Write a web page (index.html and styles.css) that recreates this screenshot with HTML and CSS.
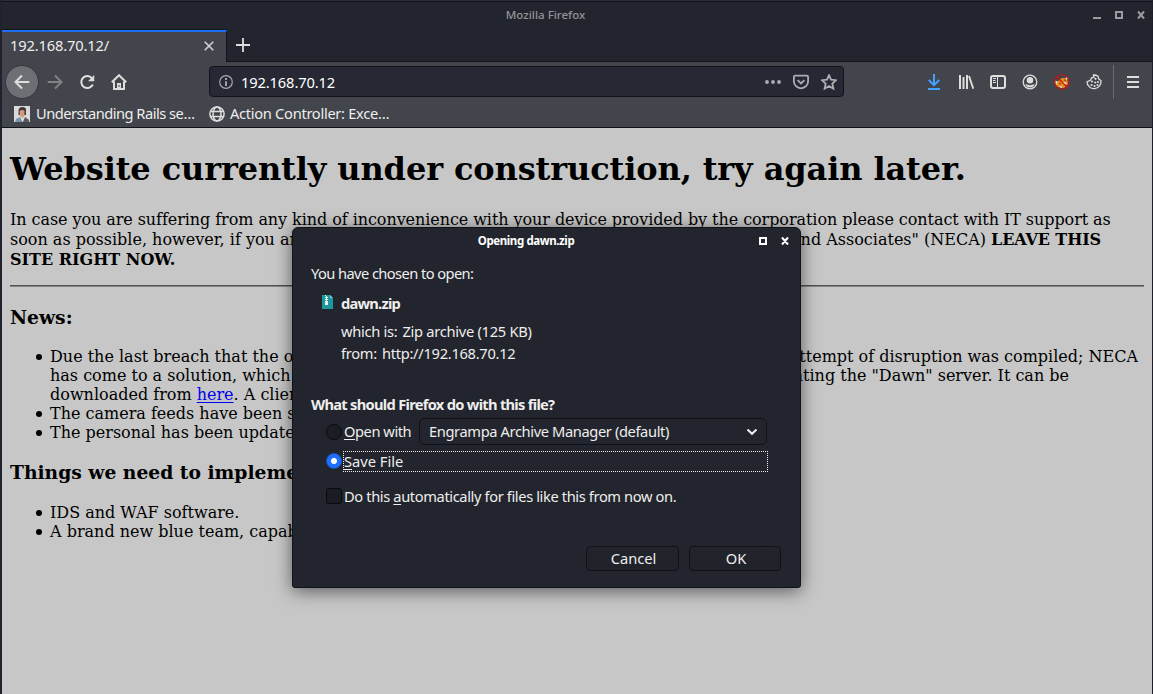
FILE: index.html
```
<!DOCTYPE html>
<html lang="en">
<head>
<meta charset="utf-8">
<title>Mozilla Firefox</title>
<link rel="stylesheet" href="styles.css">
</head>
<body>
<div class="window">
  <header class="titlebar">
    <span class="window-title">Mozilla Firefox</span>
    <svg class="window-controls" width="54" height="10" viewBox="0 0 54 10"><path d="M1 8h8M46 1.500l6 7M52 1.500l-6 7" fill="none" stroke="#9b9ca1" stroke-width="2"/><path d="M24 2h6v6h-6z" fill="none" stroke="#9b9ca1" stroke-width="2"/></svg>
  </header>
  <div class="tabs">
    <div class="tab"><span class="tab-label">192.168.70.12/</span>
      <svg width="10" height="10" viewBox="0 0 10 10"><path d="M.7.7l8.600 8.600M9.300.7L.7 9.300" stroke="#d3d3d3" stroke-width="1.600"/></svg>
    </div>
    <svg class="new-tab" width="14" height="14" viewBox="0 0 14 14"><path d="M7 0v14M0 7h14" stroke="#dededd" stroke-width="1.800"/></svg>
  </div>
  <nav class="toolbar">
    <span class="back"><svg width="16" height="16" viewBox="0 0 16 16"><path d="M15.300 8H1.500M8 1.500L1.500 8 8 14.500" class="stroke"/></svg></span>
    <svg class="forward" width="16" height="16" viewBox="0 0 16 16"><path d="M.7 8h13.800M8 1.500L14.500 8 8 14.500" class="stroke"/></svg>
    <svg class="reload" width="16" height="16" viewBox="0 0 16 16"><path d="M13 4.300a6 6 0 1 0 .8 6.200" class="stroke"/><path d="M15.200 1v6.300H9z" fill="#dededd"/></svg>
    <svg class="home" width="16" height="16" viewBox="0 0 16 16"><path d="M.8 8.300L8 1.200l7.200 7.100M3 7.500V15h10V7.500" class="stroke"/><path d="M6 9h4v6H6z" fill="#dededd"/><path d="M8 11v2" stroke="#43454c" stroke-width="1"/></svg>
    <div class="urlbar">
      <svg width="14" height="14" viewBox="0 0 14 14"><circle cx="7" cy="7" r="6.300" fill="none" stroke="#a8a9ad" stroke-width="1.200"/><path d="M7 3v2M7 6.200V11" stroke="#b5b6b9" stroke-width="1.700"/></svg>
      <span class="url">192.168.70.12</span>
      <svg width="16" height="16" viewBox="0 0 16 16" fill="#adadb1"><circle cx="2" cy="8" r="1.900"/><circle cx="8" cy="8" r="1.900"/><circle cx="14" cy="8" r="1.900"/></svg>
      <svg width="16" height="16" viewBox="0 0 16 16"><path d="M2.200 1.700h11.600q1.300 0 1.300 1.300v4.200a7.100 7.100 0 0 1-14.200 0V3q0-1.300 1.300-1.300z" class="muted"/><path d="M4.600 6.200L8 9.500l3.400-3.300" class="muted"/></svg>
      <svg width="16" height="16" viewBox="0 0 16 16"><path d="M8 1.200l2 4.500 5 .5-3.700 3.300 1.100 5.200L8 12.100l-4.400 2.600 1.100-5.200L1 6.200l5-.5z" class="muted"/></svg>
    </div>
    <div class="tools">
      <svg width="16" height="16" viewBox="0 0 16 16"><path d="M8 0v11M2.700 6L8 11.200 13.300 6M2 15h12" fill="none" stroke="#45a1ff" stroke-width="2"/></svg>
      <svg width="16" height="16" viewBox="0 0 16 16"><path d="M2 1v14M5.500 3v12M9 1v14" stroke="#dededd" stroke-width="2"/><path d="M11 2l4.300 12.800" stroke="#dededd" stroke-width="1.900"/></svg>
      <svg width="16" height="16" viewBox="0 0 16 16"><rect x="1" y="2" width="14" height="12" rx="2" class="stroke"/><path d="M7.500 2v12" stroke="#dededd"/><path d="M3 4.500h3M3 6.500h2.500M3 8.500h3" stroke="#dededd"/></svg>
      <svg width="16" height="16" viewBox="0 0 16 16"><circle cx="8" cy="8" r="6.800" fill="none" stroke="#dededd" stroke-width="1.300"/><circle cx="8" cy="6.300" r="3.200" fill="#dededd"/><path d="M3.200 10.300l3 .5q1.800 1 3.600 0l3-.5Q11 13.500 8 13.500t-4.800-3.200z" fill="#dededd"/></svg>
      <svg width="16" height="16" viewBox="0 0 16 16"><path d="M1 8l3-1 4-3 5 0 1 6-4 4-6-1-3-3z" fill="#e98a1b"/><path d="M1 6l2.500 2L2 11zM9 8l4 1-3 2zM12 3l2 1-1.500 2zM5 12l4 1-2 1z" fill="#eee"/><path d="M10 6l2 .4M5 9l2 1" stroke="#6c3c1b"/><circle cx="8" cy="8" r="7.200" fill="none" stroke="#c51518" stroke-width="1.100"/><path d="M3 3l10 10" stroke="#c51518" stroke-width="1.300"/></svg>
      <svg width="16" height="16" viewBox="0 0 16 16"><path d="M7.500 1L8 3.200l-2.500.6L4.600 6 1 7.800a7 7 0 1 0 13.900-1.300L12.800 5 12 2.200A7 7 0 0 0 7.500 1z" fill="none" stroke="#dededd" stroke-width="1.300"/><g fill="#dededd"><circle cx="9.500" cy="4.800" r="1.100"/><circle cx="6" cy="7.500" r="1.100"/><circle cx="9.300" cy="8.500" r="1.100"/><circle cx="12" cy="8" r="1"/><circle cx="5.500" cy="11" r="1.100"/><circle cx="8.500" cy="12" r="1.100"/><circle cx="11.500" cy="11" r="1"/></g></svg>
      <span class="divider"></span>
      <svg width="12" height="12" viewBox="0 0 12 12"><path d="M0 1h12M0 6h12M0 11h12" stroke="#dededd" stroke-width="1.800"/></svg>
    </div>
  </nav>
  <div class="bookmarks">
    <svg width="16" height="16" viewBox="0 0 16 16"><path d="M0 0h16v16H0z" fill="#d9dad9"/><path d="M4.500 9V5q0-4 4-4t3.500 4v4z" fill="#42383b"/><path d="M5.500 5q3-2 5 0v5l-2 2-2.500-2z" fill="#d79a7d"/><path d="M1 16l1-3 4-2 3 5z" fill="#7998ae"/><path d="M9 16l2-5 4 3v2z" fill="#5d5659"/><path d="M7 12l2 1v3z" fill="#e3e5e7"/></svg>
    <span class="bookmark first">Understanding Rails se…</span>
    <svg width="16" height="16" viewBox="0 0 16 16" fill="none" stroke="#dededd" stroke-width="1.500"><circle cx="8" cy="8" r="7.100"/><ellipse cx="8" cy="8" rx="4" ry="7"/><path d="M1.500 5.500h13M1.500 10.500h13"/></svg>
    <span class="bookmark second">Action Controller: Exce…</span>
  </div>
  <main class="page">
    <h1>Website currently under construction, try again later.</h1>
    <div class="intro">
      <div class="line first-line">In case you are suffering from any kind of inconvenience with your device provided by the corporation please contact with IT support as</div>
      <div class="line split intro-split"><span>soon as possible, however, if you are</span><span>and Associates" (NECA) <b>LEAVE THIS</b></span></div>
      <div class="line"><b>SITE RIGHT NOW.</b></div>
    </div>
    <hr>
    <h3>News:</h3>
    <ul>
      <li>
        <div class="split first-news"><span>Due the last breach that the or</span><span>attempt of disruption was compiled; NECA</span></div>
        <div class="split second-news"><span>has come to a solution, which</span><span>ating the "Dawn" server. It can be</span></div>
        <div>downloaded from <a href="#">here</a>. A clien</div>
      </li>
      <li>The camera feeds have been s</li>
      <li>The personal has been update</li>
    </ul>
    <h3 class="todo">Things we need to impleme</h3>
    <ul>
      <li>IDS and WAF software.</li>
      <li>A brand new blue team, capab</li>
    </ul>
  </main>
</div>

<section class="dialog">
  <header class="dialog-head">
    <span class="dialog-title">Opening dawn.zip</span>
    <svg class="dialog-controls" width="32" height="10" viewBox="0 0 32 10" fill="none" stroke="#fff" stroke-width="2"><path d="M2 2h6v6H2zM24 1.500l6 7M30 1.500l-6 7"/></svg>
  </header>
  <p class="chosen">You have chosen to open:</p>
  <div class="file">
    <svg width="12" height="14" viewBox="0 0 12 14"><path d="M0 0h8l3 3v11H0z" fill="#1c979b"/><path d="M8 0v3h3z" fill="#78c9c7"/><path d="M3 0v1h1v1H3v1h1v1H3v1h1v1H3v4h3V6H5V5h1V4H5V3h1V2H5V1H4V0z" fill="#e9f5f4"/></svg>
    <b>dawn.zip</b>
  </div>
  <div class="detail"><span>which is:</span><span>Zip archive (125 KB)</span></div>
  <div class="detail"><span>from:</span><span>http://192.168.70.12</span></div>
  <b class="question">What should Firefox do with this file?</b>
  <div class="choice open"><span class="radio"></span><span class="open-label"><u>O</u>pen with</span>
    <div class="select"><span>Engrampa Archive Manager (default)</span><svg width="12" height="8" viewBox="0 0 12 8"><path d="M1.500 1.500L6 5.800l4.500-4.300" fill="none" stroke="#eeeeec" stroke-width="2"/></svg></div>
  </div>
  <div class="choice save"><span class="radio checked"></span><span class="focus"><span><u>S</u>ave File</span></span></div>
  <div class="choice auto"><span class="checkbox"></span><span class="auto-label">Do this <u>a</u>utomatically for files like this from now on.</span></div>
  <div class="actions"><span class="button">Cancel</span><span class="button ok">OK</span></div>
</section>
</body>
</html>
```
FILE: styles.css
```
* { box-sizing: border-box; }
body { margin: 0; width: 1153px; height: 694px; overflow: hidden; position: relative; background: #23252e; color: #eeeeec; font: 14.67px/20px "Noto Sans", sans-serif; }
svg { display: block; flex: none; }
span, b { white-space: nowrap; }
.stroke { fill: none; stroke: #dededd; stroke-width: 2; }
.muted { fill: none; stroke: #adadb1; stroke-width: 1.8; }
.window { height: 694px; display: flex; flex-direction: column; border-left: 2px solid #1f222c; border-right: 1px solid #1b1e27; }
.titlebar { height: 30px; border-top: 1px solid #2c2e37; box-shadow: inset 0 1px #11131a; display: flex; justify-content: flex-end; align-items: center; padding: 0 6px 1px 0; flex: none; }
.window-title { flex: 1; text-align: center; padding-right: 3px; font-size: 11.5px; font-weight: 500; color: #929398; }
.window-controls { flex: none; }
.tabs { height: 32px; flex: none; display: flex; align-items: center; border-bottom: 1px solid #14161d; }
.tab { width: 225px; height: 32px; background: #43454c; border-top: 2px solid #1d6ff2; border-right: 1px solid #14161d; padding: 0 12px 1px 8px; display: flex; align-items: center; justify-content: space-between; box-shadow: 0 -1px #14161d; position: relative; }
.tab-label { margin-top: -3px; letter-spacing: -.15px; }
.new-tab { margin-left: 9px; margin-top: -2px; }
.toolbar { height: 39px; flex: none; background: #43454c; display: flex; align-items: center; padding: 0 13px 0 3px; }
.back { width: 34px; height: 34px; border-radius: 50%; background: #6e6f75; border: 1px solid #34363d; display: grid; place-items: center; }
.forward { opacity: .4; margin-left: 8px; }
.reload, .home { margin-left: 16px; }
.urlbar { width: 635px; height: 31px; margin-left: 82px; border: 1px solid #111319; border-radius: 4px; background: #262833; display: flex; align-items: center; gap: 12px; padding: 0 6px 0 9px; }
.url { flex: 1; color: #fff; margin-left: -4px; letter-spacing: -.12px; }
.tools { flex: 1; display: flex; align-items: center; justify-content: flex-end; gap: 16px; }
.divider { width: 1px; height: 34px; background: #696b70; margin: 0 -3px 0 -5px; }
.bookmarks { height: 27px; flex: none; background: #43454c; border-bottom: 1px solid #101219; display: flex; align-items: center; padding-left: 12px; }
.bookmark { margin: -2px 0 0 6px; }
.bookmark.first { width: 159px; margin-right: 14px; letter-spacing: -.5px; }
.bookmark.second { margin-left: 5px; letter-spacing: -.3px; }
.page { flex: 1; background: #c7c7c7; color: #000; padding: 22px 8px 0; font: 16px/19px "DejaVu Serif", serif; }
.page h1 { font-size: 32px; line-height: 38px; margin: 0 0 22px; white-space: nowrap; letter-spacing: -.11px; }
.intro { line-height: 20px; }
.line { white-space: nowrap; }
.first-line { letter-spacing: -.067px; }
.split { display: flex; justify-content: space-between; }
.intro-split { width: 1091px; }
.intro-split b { letter-spacing: -.1px; }
.first-news { width: 1088px; }
.second-news { width: 1019px; }
.page hr { height: 2px; border: 0; border-top: 1px solid #505050; border-bottom: 1px solid #858585; margin: 15px 0 19px; }
.page h3 { font-size: 18.72px; line-height: 22px; margin: 0 0 19px; }
.page .todo { margin-bottom: 20px; }
.page ul { margin: 0 0 19px; padding-left: 40px; list-style: none; }
.page li { position: relative; }
.page li::before { content: ""; position: absolute; left: -14px; top: 7px; width: 6px; height: 6px; border-radius: 50%; background: #000; }
.page a { color: #0000ee; text-decoration-thickness: 1px; text-underline-offset: 2px; text-decoration-skip-ink: none; }
.dialog { position: absolute; left: 292px; top: 227px; width: 509px; height: 361px; border: 1px solid #11131a; border-radius: 6px 6px 3px 3px; background: #23252e; box-shadow: 0 3px 18px rgba(0,0,0,.55); padding: 0 19px 0 18px; }
.dialog-head { height: 26px; display: flex; align-items: center; }
.dialog-title { flex: 1; text-align: center; padding-right: 17px; font-size: 11.5px; font-weight: 700; letter-spacing: -.4px; color: #fff; }
.dialog-controls { margin-right: -9px; }
.chosen { margin: 9px 0 0; letter-spacing: -.58px; }
.file { display: flex; align-items: center; gap: 7px; margin: 10px 0 8px 11px; letter-spacing: -.75px; }
.file svg { margin-top: -3px; }
.detail { display: flex; gap: 5px; margin-left: 30px; height: 22px; letter-spacing: -.28px; }
.question { display: block; margin-top: 29px; letter-spacing: -.71px; }
.choice { display: flex; align-items: center; margin-left: 15px; }
.choice u { text-underline-offset: 2px; }
.open { height: 27px; margin-top: 4px; }
.radio, .checkbox { width: 16px; height: 16px; flex: none; border: 1px solid #090b10; background: #1b1d24; border-radius: 50%; }
.checkbox { border-radius: 3px; }
.checked { border: 1px solid #1755bd; background: radial-gradient(circle, #fff 0 2.7px, #1f70ff 3.3px); margin-top: -1px; }
.open-label { margin: -1px 0 0 2px; width: 75px; letter-spacing: -.45px; }
.select { width: 348px; height: 27px; border: 1px solid #101218; border-radius: 5px; display: flex; align-items: center; justify-content: space-between; padding: 0 8px 0 9px; letter-spacing: -.38px; }
.select span { margin-top: -2px; }
.save { margin-top: 6px; height: 21px; }
.focus { width: 425px; height: 21px; border: 1px dotted #eee; display: flex; align-items: center; margin-left: 1px; padding-bottom: 1px; }
.auto { margin-top: 14px; height: 20px; }
.auto-label { margin-left: 2px; letter-spacing: -.38px; }
.actions { display: flex; justify-content: flex-end; gap: 10px; margin-top: 40px; }
.button { width: 93px; height: 25px; border: 1px solid #101218; border-radius: 4px; display: grid; place-items: center; padding: 0 0 2px 2px; line-height: 20px; background: linear-gradient(#22242d, #20222a); }
.button.ok { width: 92px; }
```
